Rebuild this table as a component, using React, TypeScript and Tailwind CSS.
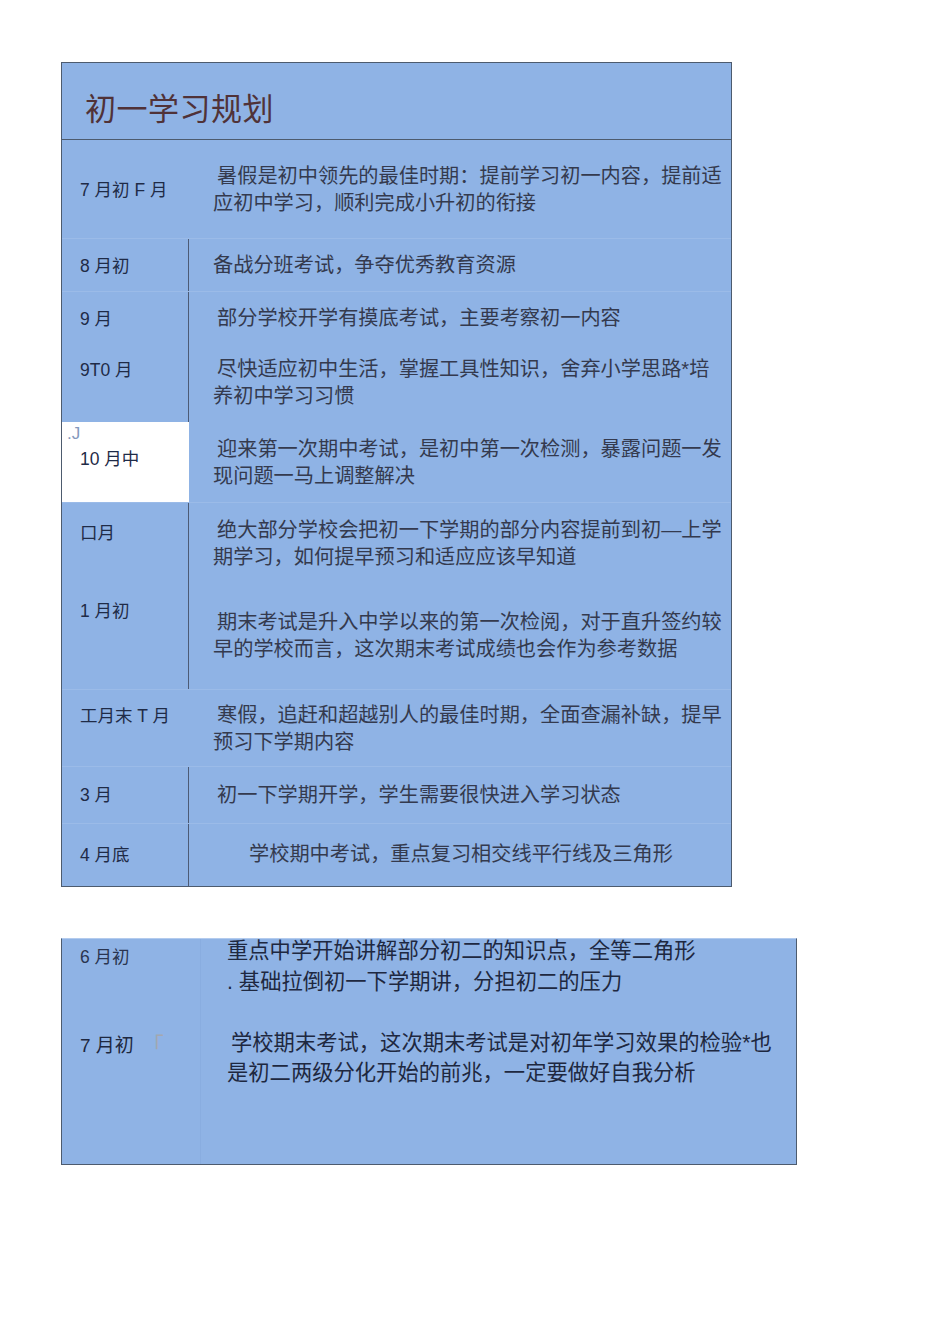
const cjk = '"Liberation Sans", "Noto Sans CJK SC", sans-serif';

type Row = {
  label: string;
  lines: string[];
  h: string;
  lpt: string;
  tpt: string;
  line: boolean;
  indent: string;
  tpl?: string;
  white?: boolean;
  sep?: boolean;
};

const rows: Row[] = [
  {
    label: '7 月初 F 月',
    lines: ['暑假是初中领先的最佳时期：提前学习初一内容，提前适', '应初中学习，顺利完成小升初的衔接'],
    h: 'h-[98px]',
    lpt: 'pt-[40px]',
    tpt: 'pt-[23px]',
    line: false,
    indent: 'indent-[4px]',
  },
  {
    label: '8 月初',
    lines: ['备战分班考试，争夺优秀教育资源'],
    h: 'h-[53px]',
    lpt: 'pt-[17px]',
    tpt: 'pt-[13px]',
    line: true,
    indent: 'indent-0',
    sep: true,
  },
  {
    label: '9 月',
    lines: ['部分学校开学有摸底考试，主要考察初一内容'],
    h: 'h-[54px]',
    lpt: 'pt-[17px]',
    tpt: 'pt-[13px]',
    line: true,
    indent: 'indent-[4px]',
    sep: true,
  },
  {
    label: '9T0 月',
    lines: ['尽快适应初中生活，掌握工具性知识，舍弃小学思路*培', '养初中学习习惯'],
    h: 'h-[77px]',
    lpt: 'pt-[15px]',
    tpt: 'pt-[11px]',
    line: true,
    indent: 'indent-[4px]',
  },
  {
    label: '10 月中',
    lines: ['迎来第一次期中考试，是初中第一次检测，暴露问题一发', '现问题一马上调整解决'],
    h: 'h-[80px]',
    lpt: 'pt-[3px]',
    tpt: 'pt-[14px]',
    line: false,
    indent: 'indent-[4px]',
    white: true,
  },
  {
    label: '口月',
    lines: ['绝大部分学校会把初一下学期的部分内容提前到初—上学', '期学习，如何提早预习和适应应该早知道'],
    h: 'h-[82px]',
    lpt: 'pt-[20px]',
    tpt: 'pt-[14px]',
    line: true,
    indent: 'indent-[4px]',
    sep: true,
  },
  {
    label: '1 月初',
    lines: ['期末考试是升入中学以来的第一次检阅，对于直升签约较', '早的学校而言，这次期末考试成绩也会作为参考数据'],
    h: 'h-[105px]',
    lpt: 'pt-[17px]',
    tpt: 'pt-[25px]',
    line: true,
    indent: 'indent-[4px]',
  },
  {
    label: '工月末 T 月',
    lines: ['寒假，追赶和超越别人的最佳时期，全面查漏补缺，提早', '预习下学期内容'],
    h: 'h-[77px]',
    lpt: 'pt-[16px]',
    tpt: 'pt-[12px]',
    line: false,
    indent: 'indent-[4px]',
    sep: true,
  },
  {
    label: '3 月',
    lines: ['初一下学期开学，学生需要很快进入学习状态'],
    h: 'h-[57px]',
    lpt: 'pt-[18px]',
    tpt: 'pt-[15px]',
    line: true,
    indent: 'indent-[4px]',
    sep: true,
  },
  {
    label: '4 月底',
    lines: ['学校期中考试，重点复习相交线平行线及三角形'],
    h: 'h-[63px]',
    lpt: 'pt-[21px]',
    tpt: 'pt-[17px]',
    line: true,
    indent: 'indent-0',
    tpl: 'pl-[60px]',
    sep: true,
  },
];

function PlanRow({ row }: { row: Row }) {
  return (
    <div className={`flex ${row.h} ${row.sep ? 'border-t border-[#9bbbe8]' : ''}`}>
      <div
        className={`w-[127px] shrink-0 border-r ${row.line ? 'border-[#4d5b75]' : 'border-transparent'} ${
          row.white ? 'bg-white' : ''
        } ${row.lpt}`}
      >
        {row.white && (
          <div className="pl-[5px] text-[17px] leading-[18px] text-[#8499bd]">.J</div>
        )}
        <div
          className={`${row.white ? 'pl-[18px] pt-[6px]' : 'pl-[18px]'} text-[17.5px] leading-[20px] text-[#1f2b47] whitespace-nowrap`}
        >
          {row.label}
        </div>
      </div>
      <div className={`flex-1 ${row.tpl ?? 'pl-[24px]'} ${row.tpt} text-[20.2px] leading-[27px] text-[#343a4e]`}>
        {row.lines.map((l, i) => (
          <div key={i} className={`whitespace-nowrap ${i === 0 ? row.indent : ''}`}>
            {l}
          </div>
        ))}
      </div>
    </div>
  );
}

export default function App() {
  return (
    <div className="w-[950px] min-h-[1344px] bg-white pt-[62px] pl-[61px]" style={{ fontFamily: cjk }}>
      <div className="w-[671px] border border-[#4d5b6e] bg-[#8fb3e5]">
        <div className="h-[77px] border-b border-[#4d5b6e] pl-[23px] pt-[29px]">
          <div className="text-[31px] leading-[36px] font-normal tracking-[0.5px] text-[#503238]">初一学习规划</div>
        </div>
        {rows.map((r, i) => (
          <PlanRow key={i} row={r} />
        ))}
      </div>

      <div className="mt-[51px] w-[736px] h-[227px] flex border-x border-b border-[#4d5b6e] border-t border-t-[#b3cbee] bg-[#8fb3e5]">
        <div className="w-[139px] shrink-0 border-r border-[#89ade0] pl-[18px]">
          <div className="pt-[8px] text-[17.5px] leading-[20px] text-[#2a3550]">6 月初</div>
          <div className="mt-[68px] flex items-center text-[19px] leading-[22px] text-[#1e2840] whitespace-nowrap">
            <span>7 月初</span>
            <span className="ml-[8px] text-[22px] leading-[22px] text-[#a3a8b0]">「</span>
          </div>
        </div>
        <div className="flex-1 pl-[26px] text-[21.3px] text-[#1e2840]">
          <div className="-mt-[3px] leading-[31px]">
            <div className="whitespace-nowrap">重点中学开始讲解部分初二的知识点，全等二角形</div>
            <div className="whitespace-nowrap">. 基础拉倒初一下学期讲，分担初二的压力</div>
          </div>
          <div className="mt-[30px] leading-[30px]">
            <div className="whitespace-nowrap indent-[4px]">学校期末考试，这次期末考试是对初年学习效果的检验*也</div>
            <div className="whitespace-nowrap">是初二两级分化开始的前兆，一定要做好自我分析</div>
          </div>
        </div>
      </div>
    </div>
  );
}
